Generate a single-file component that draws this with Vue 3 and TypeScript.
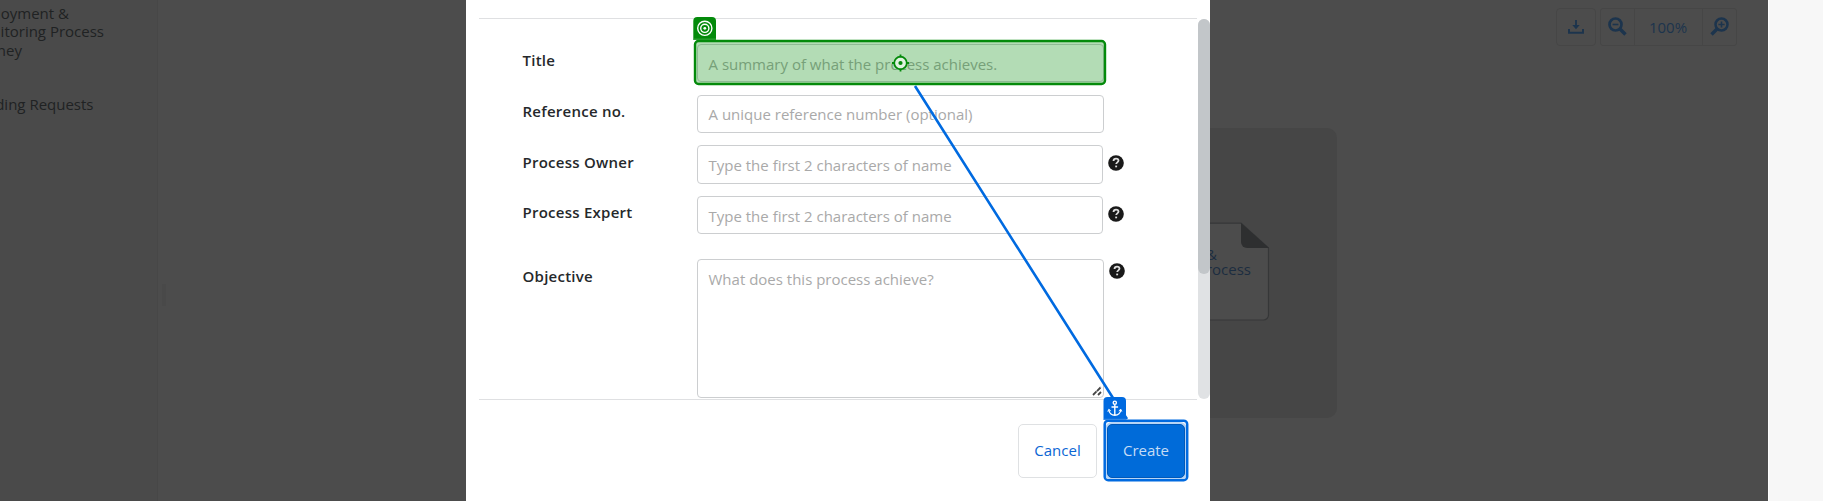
<script setup lang="ts">
interface Field {
  key: string
  label: string
  placeholder: string
  help: boolean
}

const fields: Field[] = [
  { key: 'title', label: 'Title', placeholder: 'A summary of what the process achieves.', help: false },
  { key: 'reference', label: 'Reference no.', placeholder: 'A unique reference number (optional)', help: false },
  { key: 'owner', label: 'Process Owner', placeholder: 'Type the first 2 characters of name', help: true },
  { key: 'expert', label: 'Process Expert', placeholder: 'Type the first 2 characters of name', help: true },
  { key: 'objective', label: 'Objective', placeholder: 'What does this process achieve?', help: true },
]

const journeyLines: string[][] = [
  ['loyment &', 'a'],
  ['itoring Process', 'b'],
  ['ney', 'c'],
]
</script>

<template>
  <div class="page">
    <aside class="sidebar">
      <div v-for="line in journeyLines" :key="line[1]" class="side-line" :class="line[1]"><span>{{ line[0] }}</span></div>
      <div class="side-line d"><span>ding Requests</span></div>
    </aside>

    <main class="canvas">
      <div class="grip"></div>
      <div class="toolbar">
        <div class="tool single">
          <svg width="16" height="14" viewBox="0 0 16 14">
            <path d="M1 9v3.8h14V9" fill="none" stroke="#1c344d" stroke-width="1.9" />
            <path d="M7.1 0h1.8v5h2.8L8 9.2 4.3 5h2.8z" fill="#1c344d" />
          </svg>
        </div>
        <div class="group">
          <div class="tool out">
            <svg width="19" height="19" viewBox="0 0 19 19" fill="none" stroke="#1c344d">
              <circle cx="7.5" cy="7.5" r="6" stroke-width="2.7" />
              <path d="M12 12l5.5 5.5" stroke-width="3.4" />
              <path d="M4.6 7.5h5.8" stroke-width="1.6" />
            </svg>
          </div>
          <div class="tool level">100%</div>
          <div class="tool in">
            <svg width="19" height="19" viewBox="0 0 19 19" fill="none" stroke="#1c344d">
              <circle cx="11.5" cy="7.5" r="6" stroke-width="2.5" />
              <path d="M7 12l-5.5 5.5" stroke-width="3.4" />
              <path d="M8.4 7.5h6.2M11.5 4.4v6.2" stroke-width="1.6" />
            </svg>
          </div>
        </div>
      </div>
      <div class="lane">
        <svg class="doc" width="130" height="102" viewBox="0 0 130 102">
          <path d="M0 2.2H101L128.5 27V94a5 5 0 0 1-5 5H0z" fill="#4c4c4c" stroke="#363738" stroke-width="1.2" />
          <path d="M101 2v19a6 6 0 0 0 6 6h22z" fill="#2e2f30" />
        </svg>
        <div class="doc-text"><span>&amp;</span><span>rocess</span></div>
      </div>
    </main>
    <div class="gutter"></div>

    <section class="modal">
      <div class="body">
        <form class="form">
          <div v-for="f in fields" :key="f.key" class="row" :class="f.key">
            <span class="label">{{ f.label }}</span>
            <div class="input">
              <span>{{ f.placeholder }}</span>
              <svg v-if="f.key === 'objective'" class="resize" width="10" height="10" viewBox="0 0 10 10">
                <path d="M1 9L9 1M6 9l3-3" stroke="#444" stroke-width="1.8" stroke-dasharray="5 .6" />
              </svg>
            </div>
            <svg v-if="f.help" class="help" width="16" height="16" viewBox="0 0 16 16">
              <circle cx="8" cy="8" r="7.8" fill="#191919" />
              <path d="M5.5 6C5.6 4.3 6.7 3.6 8 3.6c1.4 0 2.5.7 2.5 2 0 1.7-2.3 1.8-2.3 3.5" fill="none" stroke="#ddd" stroke-width="1.8" />
              <path d="M7.2 10.6h1.9v1.7H7.2z" fill="#ddd" />
            </svg>
          </div>
        </form>
        <div class="track"><div class="thumb"></div></div>
      </div>
      <footer class="footer">
        <div class="btn cancel">Cancel</div>
        <div class="btn create">Create</div>
      </footer>
    </section>

    <svg class="annotations" width="1823" height="501" viewBox="0 0 1823 501">
      <path d="M915 86L1113 398l14 21" fill="none" stroke="#006ae0" stroke-width="2.6" />

      <path d="M693.3 40V21a4 4 0 0 1 4-4H712a4 4 0 0 1 4 4v19z" fill="#048a0b" />
      <path d="M693.5 39.2H716" stroke="#58b25c" stroke-width=".8" />
      <rect x="695" y="41" width="410" height="43" rx="3.5" fill="#048a0b" fill-opacity=".3" stroke="#048a0b" stroke-width="2.4" />
      <g fill="none" stroke="#fff" stroke-width="1.4">
        <circle cx="704.8" cy="28.3" r="7.1" />
        <circle cx="704.8" cy="28.3" r="4.1" />
      </g>
      <circle cx="704.8" cy="28.3" r="1.4" fill="#fff" />
      <g fill="none" stroke="#048a0b" stroke-width="1.8">
        <circle cx="900.5" cy="63" r="6.3" fill="#e0f2e1" />
        <path d="M900.5 54.5v3M900.5 68.5v3M892 63h3M906 63h3" />
      </g>
      <circle cx="900.5" cy="63" r="2.1" fill="#048a0b" />

      <rect x="1104.7" y="420.7" width="82.5" height="59.5" rx="3.5" fill="none" stroke="#006ae0" stroke-width="2.5" />
      <path d="M1103.5 420v-19a4 4 0 0 1 4-4H1122a4 4 0 0 1 4 4v19z" fill="#006ae0" />
      <path d="M1104 419.3H1126" stroke="#5a9eea" stroke-width=".7" />
      <g fill="none" stroke="#fff" stroke-width="1.4">
        <circle cx="1114.8" cy="402.7" r="1.6" />
        <path d="M1114.8 404.4v11M1111.5 407h6.6M1108.8 409.8c.3 3.2 2.8 5.4 6 5.4s5.7-2.2 6-5.4" />
        <path d="M1107.8 411.6l1-2.3 2 1.6M1121.8 411.6l-1-2.3-2 1.6" stroke-width="1" />
      </g>
    </svg>
  </div>
</template>

<style>
body { margin: 0; overflow: hidden; }
</style>

<style scoped>
.page {
  position: relative;
  display: flex;
  width: 1823px;
  height: 501px;
  overflow: hidden;
  background: #4c4c4c;
  font-family: "Open Sans", "Noto Sans", sans-serif;
  font-size: 15px;
}
.page * { box-sizing: border-box; }
.sidebar {
  width: 158px;
  padding-top: 3px;
  background: #4a4a4a;
  border-right: 1px solid #474747;
  color: #202223;
  overflow: hidden;
}
.side-line {
  display: flex;
  justify-content: flex-end;
  height: 18px;
  line-height: 20px;
  white-space: nowrap;
}
.a { width: 69px; }
.b { width: 104px; height: 19px; }
.c { width: 22px; }
.d { width: 93.5px; margin-top: 36px; }
.canvas { display: flex; flex-direction: column; flex: 1; position: relative; }
.grip {
  position: absolute;
  left: 4px;
  top: 284px;
  width: 4px;
  height: 22px;
  background: #494949;
}
.toolbar {
  display: flex;
  justify-content: flex-end;
  gap: 4px;
  height: 38px;
  margin: 8px 31px 0 0;
  color: #1c344d;
}
.tool { display: flex; align-items: center; justify-content: center; }
.single { width: 40px; border: 1px solid #464646; border-radius: 4px; }
.single svg { margin-top: -1px; }
.group { display: flex; width: 137px; border: 1px solid #464646; border-radius: 3px; }
.out { width: 33px; }
.out svg, .in svg { margin-top: -1px; }
.level { width: 69px; padding-right: 1px; border: 1px solid #464646; border-width: 0 1px; }
.in { flex: 1; }
.lane {
  align-self: flex-end;
  position: relative;
  width: 187px;
  height: 290px;
  margin: 82px 431px 0 0;
  padding: 93px 67px 0 0;
  display: flex;
  justify-content: flex-end;
  background: #464646;
  border-radius: 10px;
}
.doc { flex: none; }
.doc-text {
  position: absolute;
  right: 86px;
  top: 119px;
  display: flex;
  flex-direction: column;
  width: 45px;
  line-height: 15px;
  color: #1c2d40;
}
.doc-text span:first-child { margin-left: 0; }
.doc-text span:last-child { align-self: flex-end; }
.gutter { width: 55px; background: #f7f7f7; box-shadow: inset 1px 0 #fff; }
.modal {
  position: absolute;
  left: 466px;
  top: 0;
  width: 744px;
  height: 501px;
  background: #fff;
  padding-top: 18px;
}
.body { display: flex; justify-content: space-between; height: 382px; }
.form {
  width: 718px;
  margin-left: 13px;
  padding: 25px 0 0 44px;
  border: 1px solid #dfe0e2;
  border-width: 1px 0;
  overflow: hidden;
}
.row { display: flex; height: 38px; margin-bottom: 13px; }
.row.reference { margin-bottom: 12px; }
.row.owner { height: 39px; margin-bottom: 12px; }
.row.objective { height: 139px; margin-top: 25px; margin-bottom: 0; }
.label {
  width: 174px;
  line-height: 20px;
  padding-top: 6px;
  margin-left: -.5px;
  margin-right: .5px;
  font-weight: 600;
  letter-spacing: .25px;
  color: #25282b;
}
.owner .label { padding-top: 7px; }
.objective .label { padding-top: 7px; }
.input {
  position: relative;
  width: 407px;
  padding: 8px 0 0 10.5px;
  line-height: 22px;
  border: 1px solid #ccced0;
  border-radius: 4px;
  color: #a9a9a9;
}
.reference .input { padding-top: 7px; }
.owner .input, .expert .input { width: 406px; }
.resize { position: absolute; right: 1px; bottom: 1px; }
.help { margin: 10px 0 0 5px; }
.expert .help { margin-top: 9.5px; }
.objective .help { margin-top: 4px; margin-left: 4.5px; }
.track {
  width: 12px;
  height: 380px;
  margin-top: 1px;
  border-radius: 6px;
  background: #e0e2e4;
}
.thumb { height: 255px; border-radius: 6px; background: #c2c6c9; }
.footer {
  display: flex;
  justify-content: flex-end;
  gap: 10px;
  padding: 24px 25px 0 0;
}
.btn {
  display: flex;
  align-items: center;
  justify-content: center;
  height: 54px;
  padding-bottom: 2px;
  border-radius: 5px;
}
.cancel { width: 79px; border: 1px solid #dfe1e3; color: #0b66d4; }
.create { width: 78px; background: #006bd9; border: 1px solid #0058b8; color: #c6dcf5; box-shadow: 0 0 0 2px #b7d5f6; }
.annotations { position: absolute; left: 0; top: 0; }
</style>
